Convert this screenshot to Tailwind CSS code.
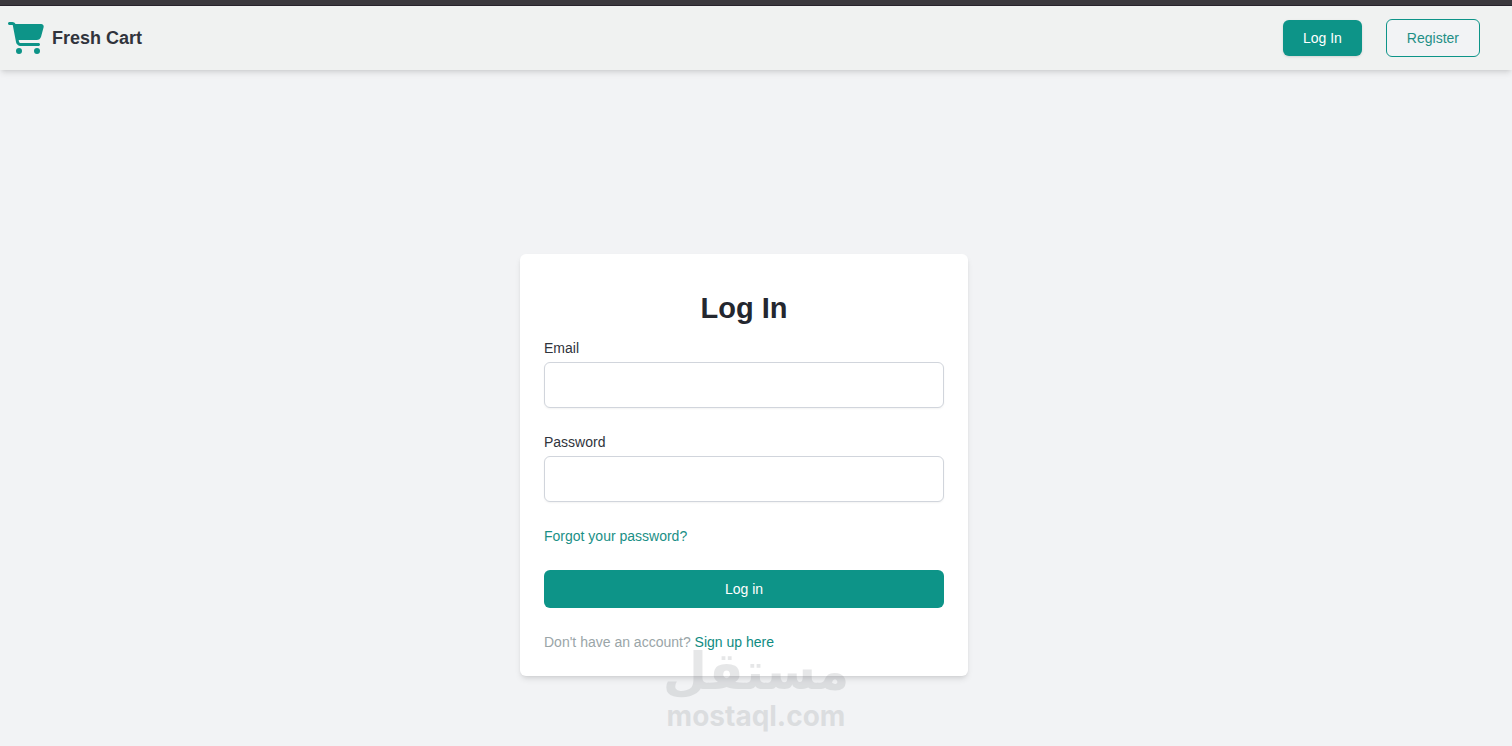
<!DOCTYPE html>
<html lang="en">
<head>
  <meta charset="UTF-8">
  <meta name="viewport" content="width=device-width, initial-scale=1.0">
  <title>Fresh Cart - Log In</title>
  <script src="https://cdn.jsdelivr.net/npm/@tailwindcss/browser@4"></script>
</head>
<body class="relative min-h-screen bg-[#f2f3f5] font-['Liberation_Sans',Arial,sans-serif] text-sm text-[#30343c]">
  <!-- Top strip -->
  <div class="h-[6px] bg-[#3b393e] border-b border-[#28242d]"></div>

  <!-- Header -->
  <header class="flex h-16 items-center justify-between bg-[#f0f2f1] pl-2 pr-8 shadow-md">
    <a href="#" class="flex items-center gap-2">
      <svg class="h-8 w-9 fill-[#0d9488]" viewBox="0 0 576 512" aria-hidden="true">
        <path d="M0 24C0 10.7 10.7 0 24 0H69.5c22 0 41.5 12.8 50.6 32h411c26.3 0 45.5 25 38.6 50.4l-41 152.3c-8.5 31.4-37 53.3-69.5 53.3H170.7l5.4 28.5c2.2 11.3 12.1 19.5 23.6 19.5H488c13.3 0 24 10.7 24 24s-10.7 24-24 24H199.7c-34.6 0-64.3-24.6-70.7-58.5L77.4 54.5c-.7-3.8-4-6.5-7.9-6.5H24C10.7 48 0 37.3 0 24zM128 464a48 48 0 1 1 96 0 48 48 0 1 1-96 0zm336-48a48 48 0 1 1 0 96 48 48 0 1 1 0-96z"/>
      </svg>
      <span class="text-lg font-bold">Fresh Cart</span>
    </a>
    <nav class="flex items-center gap-6">
      <a href="#" class="rounded-md bg-[#0d9488] px-5 py-2 text-white shadow-sm">Log In</a>
      <a href="#" class="rounded-md border border-[#0d9488] bg-[#f2f3f5] px-5 py-2 text-[#1f8f86]">Register</a>
    </nav>
  </header>

  <!-- Login form -->
  <main class="flex justify-center pt-46 pr-6">
    <form class="flex w-full max-w-md flex-col gap-6 rounded-md bg-white p-6 shadow-md">
      <div>
        <h1 class="my-3 text-center text-[29px] font-bold leading-9 text-[#24272f]">Log In</h1>
        <label for="email" class="mb-1 block">Email</label>
        <input id="email" type="email" class="block w-full rounded-md border border-gray-300 bg-white p-3 leading-5 shadow-xs">
      </div>
      <div>
        <label for="password" class="mb-1 block">Password</label>
        <input id="password" type="password" class="block w-full rounded-md border border-gray-300 bg-white p-3 leading-5 shadow-xs">
      </div>
      <a href="#" class="self-start text-[#1a8f86]">Forgot your password?</a>
      <button type="submit" class="w-full rounded-md bg-[#0d9488] py-[9px] text-white">Log in</button>
      <p class="text-[#9aa5a8]">Don't have an account? <a href="#" class="text-[#0f8b82]">Sign up here</a></p>
    </form>
  </main>

  <!-- Watermark -->
  <div class="pointer-events-none absolute inset-x-0 bottom-3 flex flex-col items-center text-[#60646a] opacity-15">
    <span lang="ar" dir="rtl" class="font-['DejaVu_Sans',sans-serif] text-[51px] font-bold leading-[52px]">مستقل</span>
    <span class="font-['Inter',sans-serif] text-[28px] font-bold leading-9">mostaql.com</span>
  </div>
</body>
</html>
